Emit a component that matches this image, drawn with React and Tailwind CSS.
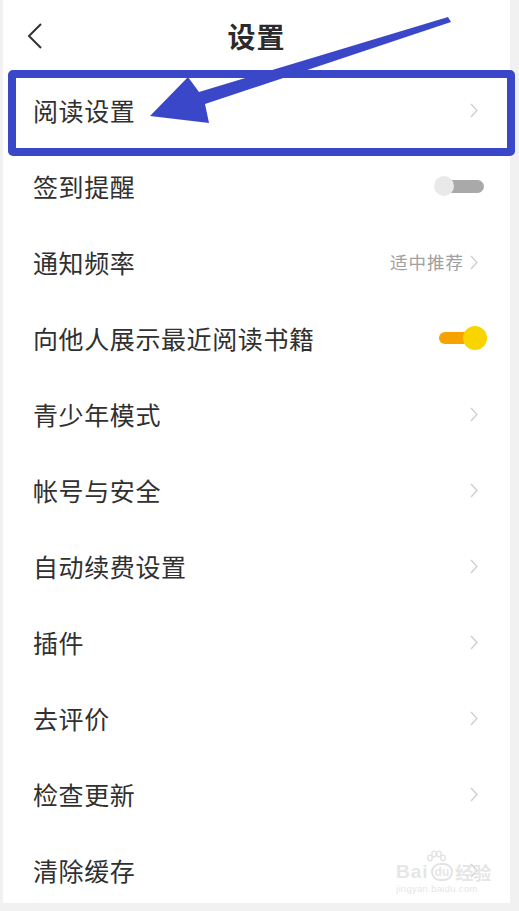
import React from 'react';

const rows = [
  { label: '阅读设置', type: 'link' },
  { label: '签到提醒', type: 'off' },
  { label: '通知频率', type: 'link', value: '适中推荐' },
  { label: '向他人展示最近阅读书籍', type: 'on' },
  { label: '青少年模式', type: 'link' },
  { label: '帐号与安全', type: 'link' },
  { label: '自动续费设置', type: 'link' },
  { label: '插件', type: 'link' },
  { label: '去评价', type: 'link' },
  { label: '检查更新', type: 'link' },
  { label: '清除缓存', type: 'link' },
];

const font = { fontFamily: '"Noto Sans CJK SC", "Noto Sans", sans-serif' };
const latin = { fontFamily: '"Liberation Sans", sans-serif' };

function Chevron() {
  return (
    <svg width="8" height="15" viewBox="0 0 8 15" className="shrink-0">
      <path d="M1 1 L7 7.5 L1 14" fill="none" stroke="#cfcfcf" strokeWidth="1.4" />
    </svg>
  );
}

function SwitchOff() {
  return (
    <div className="relative w-[50px] h-[20px] mr-[-6px]">
      <div className="absolute left-[8px] right-0 top-[4px] h-[13px] rounded-full bg-[#a9a9a9]" />
      <div className="absolute left-0 top-0 w-[20px] h-[20px] rounded-full bg-[#e9e9e9]" />
    </div>
  );
}

function SwitchOn() {
  return (
    <div className="relative w-[48px] h-[24px] mr-[-9px]">
      <div className="absolute left-0 right-[10px] top-[6px] h-[12px] rounded-full bg-[#f6a200]" />
      <div className="absolute right-0 top-0 w-[24px] h-[24px] rounded-full bg-[#f8d500]" />
    </div>
  );
}

export default function App() {
  return (
    <div className="relative w-[519px] h-[911px] bg-[#f1f1f1] overflow-hidden" style={font}>
      <div className="ml-[3px] w-[507px] h-[903px] bg-white flex flex-col">
        <div className="h-[72px] flex items-center relative shrink-0">
          <svg width="16" height="26" viewBox="0 0 16 26" className="absolute left-[24px] top-[23px]">
            <path d="M14 1 L2 13 L14 25" fill="none" stroke="#333" strokeWidth="2" />
          </svg>
          <h1 className="w-full text-center text-[28px] font-bold text-[#2b2b2b] leading-none tracking-[1px]">设置</h1>
        </div>
        {rows.map((r) => (
          <div key={r.label} className="h-[76px] shrink-0 flex items-center justify-between pl-[30px] pr-[32px]">
            <span className="text-[25px] text-[#303030] leading-none tracking-[0.6px]">{r.label}</span>
            {r.type === 'link' && (
              <div className="flex items-center gap-[6px]">
                {r.value && <span className="text-[17.5px] text-[#a0a0a0] leading-none tracking-[1px]">{r.value}</span>}
                <Chevron />
              </div>
            )}
            {r.type === 'off' && <SwitchOff />}
            {r.type === 'on' && <SwitchOn />}
          </div>
        ))}
      </div>

      {/* annotation box */}
      <div className="absolute left-[8px] top-[70px] w-[507px] h-[86px] border-[8px] border-[#3b47c9] rounded-[5px]" />

      {/* annotation arrow */}
      <svg className="absolute left-0 top-0" width="519" height="200" viewBox="0 0 519 200">
        <polygon
          points="448,17 451,22 205,104 209,123 150,116 188,77 199,92"
          fill="#3b47c9"
        />
      </svg>

      {/* watermark */}
      <div className="absolute left-[396px] top-[850px] flex flex-col items-start text-[#e6e6e6]">
        <svg width="22" height="14" viewBox="0 0 22 14" className="ml-[29px] mb-[-2px]">
          <g fill="none" stroke="#e2e2e2" strokeWidth="1.3">
            <ellipse cx="5" cy="8" rx="2.2" ry="2.8" />
            <ellipse cx="9" cy="4" rx="2.2" ry="2.8" />
            <ellipse cx="14" cy="4" rx="2.2" ry="2.8" />
            <ellipse cx="18" cy="8" rx="2.2" ry="2.8" />
          </g>
        </svg>
        <div className="flex items-center leading-none">
          <span className="text-[19px] font-bold tracking-[1px]" style={latin}>Bai</span>
          <span className="text-[12px] font-bold border-[2px] border-[#e2e2e2] rounded-full px-[2px] mx-[2px] leading-[14px]" style={latin}>du</span>
          <span className="text-[18px] font-bold">经验</span>
        </div>
        <span className="text-[9.5px] leading-none mt-[3px] tracking-[0.3px]" style={latin}>jingyan.baidu.com</span>
      </div>
    </div>
  );
}
